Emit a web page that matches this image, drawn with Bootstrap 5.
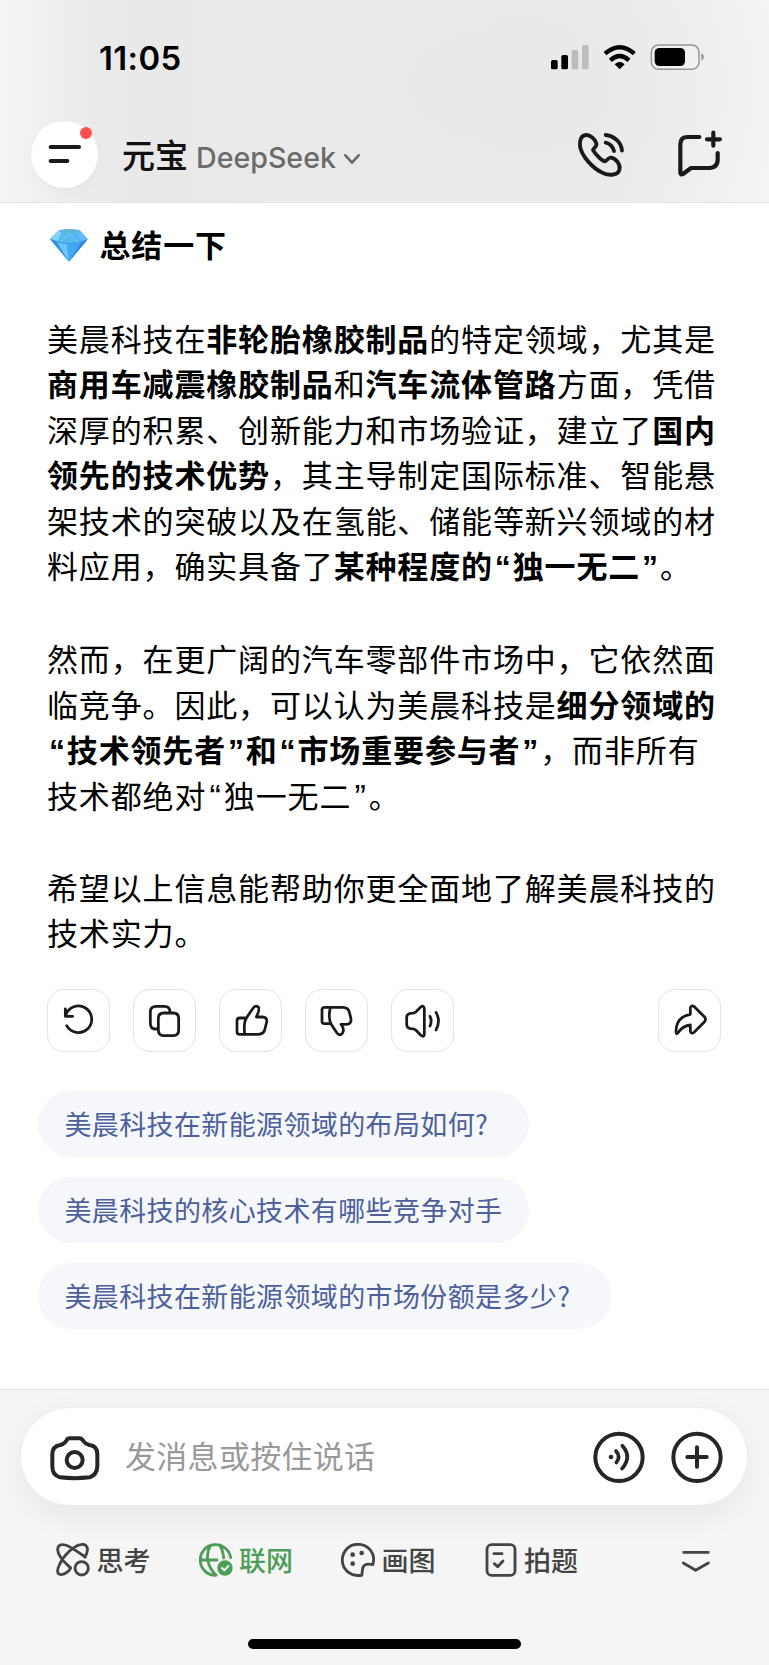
<!DOCTYPE html>
<html lang="zh-CN">
<head>
<meta charset="utf-8">
<meta name="viewport" content="width=device-width, initial-scale=1">
<title>元宝 DeepSeek</title>
<link href="https://cdn.jsdelivr.net/npm/bootstrap@5.3.0/dist/css/bootstrap.min.css" rel="stylesheet">
<style>
  body { font-family: Inter, "Noto Sans CJK SC", sans-serif; background: #fff; color: #000; }
  .phone-screen { width: 769px; height: 1665px; overflow: hidden; }
  .ico { fill: none; stroke: #1a1a1a; stroke-width: 12; stroke-linecap: round; stroke-linejoin: round; flex: none; display: block; }
  .cjk { font-family: "Noto Sans CJK SC", sans-serif; }

  .top-area { height: 203px; border-bottom: 1px solid #e4e4e4;
    background: radial-gradient(ellipse 300px 190px at 500px 85px, #e8e8e8 0%, rgba(232,232,232,0) 100%),
                linear-gradient(90deg, #f4f4f4 0, #f1f1f1 35px, #ececec 75px, #e9e9e9 140px, #eaeaea 240px, #ededed 400px, #ececec 600px, #f4f4f4 769px); }
  .status-bar { height: 105px; padding: 11px 65px 0 99px; }
  .clock { font-size: 32.8px; font-weight: 600; letter-spacing: .4px; line-height: 1; }
  .title-bar { height: 98px; padding: 0 45px 0 31px; }
  .menu-btn { width: 67px; height: 67px; background: #fff; box-shadow: 0 4px 14px rgba(0,0,40,.03); }
  .menu-dot { width: 12px; height: 12px; background: #ff4f4f; top: 6px; right: 6px; }
  .app-name { font-size: 33px; font-weight: 500; line-height: 1; color: #111; -webkit-text-stroke: .2px #111; }
  .model-name { font-size: 28.6px; font-weight: 500; line-height: 1; color: #6b6b6b; padding-top: 8px; }
  .title-chevron { stroke: #6b6b6b; stroke-width: 8; margin: 10px 0 0 6px; }
  .title-bar .compose-ico { margin-left: 45px; }

  .chat-area { height: 1186px; }
  .answer { padding: 0 47px; font-size: 31px; letter-spacing: .85px; line-height: 45.4px; }
  .answer p { margin-bottom: 47px; white-space: nowrap; }
  .answer .p-one { margin: 49px 0 48px; }
  .answer h2 { font-size: 31px; font-weight: 700; line-height: 45px; padding: 18px 0 0 1.5px; }
  .answer h2 span { margin-left: 11px; }
  .answer p > span { display: block; }
  .qm { display: inline-block; width: 17.6px; text-align: center; letter-spacing: 0; font-family: "Liberation Sans", sans-serif; font-size: 34px; line-height: 1; }
  b .qm { width: 19.8px; font-size: 32px; }
  .acts { padding: 0 48.5px 0 47px; margin-top: 34.6px; gap: 23.5px; }
  .act { width: 62.5px; height: 62.5px; border: 1.5px solid #e3e3e3; border-radius: 17px; background: #fff; }
  .act .ico { stroke-width: 8.3; }
  .asks { padding-left: 37.5px; margin-top: 39px; gap: 20px; }
  .ask { height: 66px; padding: 0 27px; background: #f5f7fb; color: #4d5f9c; font-size: 27px; letter-spacing: .37px; line-height: 66px; white-space: nowrap; }
  .half { display: inline-block; width: 27.35px; }

  .bottom-area { height: 276px; background: #f5f5f5; border-top: 1px solid #e6e6e6; padding-top: 17px; }
  .composer { height: 99px; margin: 0 21px 0 20px; padding: 0 24px 0 29px; background: #fff; border: 1px solid #ededed; box-shadow: 0 10px 32px rgba(20,20,50,.06); }
  .placeholder-text { font-size: 31px; letter-spacing: .3px; color: #999; line-height: 1.4; margin-left: 25px; padding-bottom: 3px; }
  .composer .ico { stroke: #262626; }
  .composer .plus-ico { margin-left: 26px; }
  .tool-row { height: 56px; margin-top: 25.5px; padding-left: 56px; }
  .tool { width: 142.5px; color: #444; font-size: 27px; font-weight: 500; line-height: 1; white-space: nowrap; }
  .tool span { margin-left: 6.5px; }
  .tool .ico, .fold .ico { stroke: #444; stroke-width: 8.5; }
  .tool.is-on { color: #4c9d58; }
  .tool.is-on .ico { stroke: #4c9d58; }
  .fold { margin-left: 52.5px; }
  .home-bar { width: 273px; height: 10px; background: #000; margin: 51.5px auto 0 248px; }
</style>
</head>
<body>
<div class="phone-screen d-flex flex-column">

  <header class="top-area flex-shrink-0">
    <div class="status-bar d-flex align-items-center justify-content-between">
      <div class="clock">11:05</div>
      <svg width="154" height="28" viewBox="495 132 462 84">
        <g fill="#000"><rect x="498" y="180" width="20" height="28" rx="5"/><rect x="529" y="165" width="20" height="43" rx="5"/></g>
        <g fill="#bdbdbd"><rect x="560" y="150" width="20" height="58" rx="5"/><rect x="591" y="135" width="20" height="73" rx="5"/></g>
        <g fill="none" stroke="#000" stroke-width="13"><path d="M660 161Q704 122 748 161"/><path d="M676 181Q704 155 732 181"/></g>
        <path d="M689 193Q704 179 719 193L704 208Z"/>
        <rect x="799" y="135" width="143" height="73" rx="22" fill="#f1f1f1" stroke="#969696" stroke-width="4.5"/>
        <rect x="809" y="144" width="91" height="54" rx="14"/>
        <path d="M949 160Q957 163 957 171T949 182Z" fill="#969696"/>
      </svg>
    </div>
    <div class="title-bar d-flex align-items-center">
      <div class="menu-btn rounded-circle position-relative d-flex">
        <svg class="ico" width="67" height="67" viewBox="93 363 201 201"><path d="M152 441H237M152 483H202"/></svg>
        <span class="menu-dot rounded-circle position-absolute"></span>
      </div>
      <div class="d-flex align-items-center ms-4">
        <span class="app-name cjk">元宝</span>
        <span class="model-name ms-2">DeepSeek</span>
      </div>
      <svg class="ico title-chevron" width="20" height="16" viewBox="1027 455 60 48"><path d="M1037 468L1057 490L1077 468"/></svg>
      <svg class="ico ms-auto" width="54" height="50" viewBox="571 389 162 150"><path d="M604 407C590 408 584 422 586 440C590 470 625 508 655 521C675 530 700 527 704 512C709 496 694 478 680 475C670 473 668 485 660 486C650 484 630 462 625 452C626 446 638 442 635 432C632 420 616 406 604 407ZM663 407C690 410 710 430 712 454M663 430C675 432 686 443 688 455" stroke-width="11.5"/></svg>
      <svg class="ico compose-ico" width="50" height="50" viewBox="867 389 150 150"><path d="M943 413H908Q886 413 886 435V520Q887 528 894 524L918 506H972Q998 506 998 480V461M985 400V439M966 420H1005" stroke-width="12.5"/></svg>
    </div>
  </header>

  <main class="chat-area flex-shrink-0">
    <article class="answer cjk">
      <h2 class="d-flex align-items-center mb-0">
        <svg width="40" height="36" viewBox="146 679 120 108">
          <path d="M176 692Q206 686 238 692L262 719L206 786L149 718Z" fill="#3ba4ee"/>
          <path d="M176 692Q206 686 238 692L230 700H184Z" fill="#5fb7d8"/>
          <path d="M176 692L184 700L172 726L149 718Z" fill="#7fd3fa"/>
          <path d="M184 700H230L243 728Q206 736 170 728Z" fill="#55b9f0"/>
          <path d="M230 700L238 692L262 719L243 728Z" fill="#66b9ff"/>
          <path d="M149 718L170 728L206 786Z" fill="#2d8fe0"/>
          <path d="M170 728Q188 734 200 733L206 786Z" fill="#6cc6fb"/>
          <path d="M200 733Q224 733 243 728L206 786Z" fill="#43a8f3"/>
          <path d="M243 728L262 719L206 786Z" fill="#2b84e2"/>
          <path d="M151 719Q206 745 260 720" stroke="#3f8fd0" stroke-width="2" fill="none"/>
          <path d="M205 700L180 728M205 700L232 728" stroke="#a5e4ff" stroke-width="1.5" fill="none"/>
        </svg>
        <span>总结一下</span>
      </h2>
      <p class="p-one"><span>美晨科技在<b>非轮胎橡胶制品</b>的特定领域，尤其是</span><span><b>商用车减震橡胶制品</b>和<b>汽车流体管路</b>方面，凭借</span><span>深厚的积累、创新能力和市场验证，建立了<b>国内</b></span><span><b>领先的技术优势</b>，其主导制定国际标准、智能悬</span><span>架技术的突破以及在氢能、储能等新兴领域的材</span><span>料应用，确实具备了<b>某种程度的<i class="qm fst-normal">“</i>独一无二<i class="qm fst-normal">”</i></b>。</span></p>
      <p><span>然而，在更广阔的汽车零部件市场中，它依然面</span><span>临竞争。因此，可以认为美晨科技是<b>细分领域的</b></span><span><b><i class="qm fst-normal">“</i>技术领先者<i class="qm fst-normal">”</i>和<i class="qm fst-normal">“</i>市场重要参与者<i class="qm fst-normal">”</i></b>，而非所有</span><span>技术都绝对<i class="qm fst-normal">“</i>独一无二<i class="qm fst-normal">”</i>。</span></p>
      <p class="mb-0"><span>希望以上信息能帮助你更全面地了解美晨科技的</span><span>技术实力。</span></p>
    </article>

    <div class="acts d-flex">
      <div class="act d-flex align-items-center justify-content-center"><svg class="ico" width="60" height="60" viewBox="145 61 180 180"><path d="M201 165A40 40 0 1 0 198 134M197 115V137H219"/></svg></div>
      <div class="act d-flex align-items-center justify-content-center"><svg class="ico" width="60" height="60" viewBox="403 61 180 180"><path d="M473 175H467Q452 175 452 157V124Q452 107 470 107H494Q511 107 511 124M492 127H521Q537 127 537 144V178Q537 195 521 195H492Q476 195 476 178V144Q476 127 492 127Z"/></svg></div>
      <div class="act d-flex align-items-center justify-content-center"><svg class="ico" width="60" height="60" viewBox="661 61 180 180"><path d="M735 142H720Q712 142 712 151V183Q712 191 720 191H773Q791 191 795 178L801 154Q803 139 788 139H770Q782 113 775 108Q766 103 760 113L742 139Q731 152 735 191"/></svg></div>
      <div class="act d-flex align-items-center justify-content-center"><svg class="ico" width="60" height="60" viewBox="919 61 180 180"><path d="M991 159H974Q967 159 967 152V118Q967 110 975 110H1029Q1047 110 1050 128L1054 145Q1055 161 1040 161H1024Q1036 176 1028 188Q1020 197 1012 187L996 163Q984 145 992 111"/></svg></div>
      <div class="act d-flex align-items-center justify-content-center"><svg class="ico" width="60" height="60" viewBox="1177 61 180 180"><path d="M1264 108Q1273 104 1274 113V191Q1273 200 1265 195L1249 179Q1244 174 1233 174Q1221 173 1221 160V141Q1221 129 1234 128Q1244 128 1249 123ZM1291 137Q1298 151 1291 166M1309 125Q1324 151 1309 178"/></svg></div>
      <div class="act d-flex align-items-center justify-content-center ms-auto"><svg class="ico" width="60" height="60" viewBox="179 61 180 180"><path d="M273 131V112Q275 102 285 108L315 138Q322 146 315 154L285 184Q276 192 273 182V163Q251 165 238 184Q230 196 230 181Q231 139 273 131Z"/></svg></div>
    </div>

    <div class="asks d-flex flex-column align-items-start cjk">
      <div class="ask rounded-pill">美晨科技在新能源领域的布局如何<span class="half">?</span></div>
      <div class="ask rounded-pill">美晨科技的核心技术有哪些竞争对手</div>
      <div class="ask rounded-pill">美晨科技在新能源领域的市场份额是多少<span class="half">?</span></div>
    </div>
  </main>

  <footer class="bottom-area flex-shrink-0">
    <div class="composer rounded-pill d-flex align-items-center">
      <svg class="ico" width="50" height="50" viewBox="149 155 150 150"><path d="M208 174H238Q244 174 249 182Q255 191 267 194Q291 196 291 222V258Q290 283 268 291Q223 296 179 291Q156 285 156 258V222Q156 198 180 194Q192 191 198 181Q202 174 208 174Z"/><circle cx="223" cy="239" r="24"/></svg>
      <span class="placeholder-text cjk">发消息或按住说话</span>
      <svg class="ico ms-auto" width="52" height="52" viewBox="625 153 156 156"><circle cx="703" cy="232" r="71"/><circle cx="679" cy="231" r="7" fill="#262626" stroke="none"/><path d="M694 213Q709 230 695 248M713 197Q743 230 712 266" stroke-width="11"/></svg>
      <svg class="ico plus-ico" width="52" height="52" viewBox="859 153 156 156"><circle cx="937" cy="232" r="71"/><path d="M908 231H966M937 202V260"/></svg>
    </div>
    <div class="tool-row d-flex align-items-center cjk">
      <div class="tool d-flex align-items-center"><svg class="ico" width="34" height="34" viewBox="168 487 102 102"><path d="M254 529C270 505 261 488 242 492C220 496 190 525 178 553C166 578 176 587 194 579Q207 573 212 562C208 557 190 545 179 525C166 501 176 488 196 493C218 500 240 520 256 529"/><circle cx="245" cy="563" r="20"/></svg><span>思考</span></div>
      <div class="tool is-on d-flex align-items-center"><svg class="ico" width="34" height="34" viewBox="596 487 102 102"><path d="M691 531A46 46 0 1 0 647 584M600 538H650M630 495C615 520 619 555 647 584M658 494Q668 508 670 532"/><circle cx="674" cy="562" r="23" fill="#4c9d58" stroke="none"/><path d="M665 562L672 569L684 556" style="stroke:#f5f5f5;stroke-width:6"/></svg><span>联网</span></div>
      <div class="tool d-flex align-items-center"><svg class="ico" width="34" height="34" viewBox="1022 487 102 102"><path d="M1117 552C1128 520 1105 491 1073 491C1043 491 1026 514 1026 539C1026 565 1048 588 1084 584C1088 572 1083 562 1092 554Q1101 548 1117 552Z"/><g fill="#444" stroke="none"><circle cx="1057" cy="522" r="7"/><circle cx="1084" cy="517" r="7"/><circle cx="1057" cy="549" r="7"/></g></svg><span>画图</span></div>
      <div class="tool d-flex align-items-center"><svg class="ico" width="34" height="34" viewBox="295 487 102 102"><rect x="304" y="492" width="84" height="92" rx="14"/><path d="M325 519H349M326 549L336 558L352 541"/></svg><span>拍题</span></div>
      <div class="fold"><svg class="ico" width="34" height="34" viewBox="881 487 102 102"><path d="M895 515H969M894 547L931 569L969 547"/></svg></div>
    </div>
    <div class="home-bar rounded-pill"></div>
  </footer>
</div>
<script src="https://cdn.jsdelivr.net/npm/bootstrap@5.3.0/dist/js/bootstrap.bundle.min.js"></script>
</body>
</html>
